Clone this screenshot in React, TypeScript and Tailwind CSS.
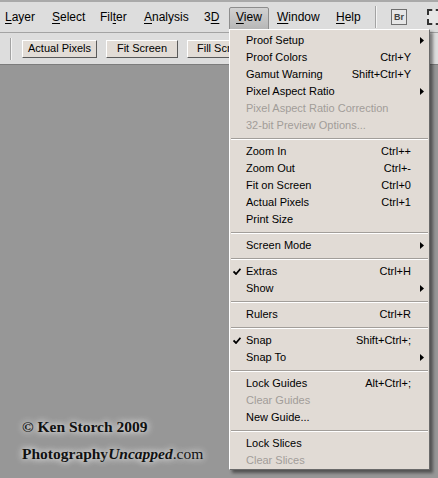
type Item = {
  label: string;
  keys?: string;
  sub?: boolean;
  off?: boolean;
  checked?: boolean;
};

const viewMenu: Item[][] = [
  [
    { label: "Proof Setup", sub: true },
    { label: "Proof Colors", keys: "Ctrl+Y" },
    { label: "Gamut Warning", keys: "Shift+Ctrl+Y" },
    { label: "Pixel Aspect Ratio", sub: true },
    { label: "Pixel Aspect Ratio Correction", off: true },
    { label: "32-bit Preview Options...", off: true },
  ],
  [
    { label: "Zoom In", keys: "Ctrl++" },
    { label: "Zoom Out", keys: "Ctrl+-" },
    { label: "Fit on Screen", keys: "Ctrl+0" },
    { label: "Actual Pixels", keys: "Ctrl+1" },
    { label: "Print Size" },
  ],
  [{ label: "Screen Mode", sub: true }],
  [
    { label: "Extras", keys: "Ctrl+H", checked: true },
    { label: "Show", sub: true },
  ],
  [{ label: "Rulers", keys: "Ctrl+R" }],
  [
    { label: "Snap", keys: "Shift+Ctrl+;", checked: true },
    { label: "Snap To", sub: true },
  ],
  [
    { label: "Lock Guides", keys: "Alt+Ctrl+;" },
    { label: "Clear Guides", off: true },
    { label: "New Guide..." },
  ],
  [{ label: "Lock Slices" }, { label: "Clear Slices", off: true }],
];

// label, mnemonic index, slot width
const topMenus: [string, number, number][] = [
  ["Layer", 0, 47],
  ["Select", 0, 48],
  ["Filter", 3, 44],
  ["Analysis", 0, 60],
  ["3D", 1, 25],
];

function Mnemonic({ text, at }: { text: string; at: number }) {
  return (
    <>
      {text.slice(0, at)}
      <span className="underline underline-offset-[2px]">{text[at]}</span>
      {text.slice(at + 1)}
    </>
  );
}

function ToolButton({ label, width }: { label: string; width: string }) {
  return (
    <div
      className={`${width} h-[18px] shrink-0 flex items-center justify-center bg-[#e2dcd6] border border-t-white border-l-white border-r-[#5a5a5a] border-b-[#5a5a5a] text-[11px] text-black`}
    >
      {label}
    </div>
  );
}

function MenuRow({ item }: { item: Item }) {
  return (
    <div
      className={`relative h-[17px] flex items-center justify-between pl-[16px] pr-[18px] ${
        item.off ? "text-[#a19d99]" : "text-black"
      }`}
    >
      {item.checked && (
        <svg
          className="absolute left-[3px] top-[5px]"
          width="8"
          height="7"
          viewBox="0 0 8 7"
        >
          <path d="M0.5 3.5 L3 6 L7.5 0.8" fill="none" stroke="#000" strokeWidth="1.8" />
        </svg>
      )}
      <span>{item.label}</span>
      {item.keys && <span>{item.keys}</span>}
      {item.sub && (
        <svg
          className="absolute right-[5px] top-[5px]"
          width="4"
          height="7"
          viewBox="0 0 4 7"
        >
          <path d="M0 0 L4 3.5 L0 7 Z" fill="#000" />
        </svg>
      )}
    </div>
  );
}

export default function App() {
  return (
    <div className="relative w-[438px] h-[478px] overflow-hidden flex flex-col bg-[#979797] font-['Liberation_Sans',Arial,sans-serif]">
      {/* Menu bar */}
      <div className="h-[33px] shrink-0 flex items-center pl-[5px] bg-[#dddddd] border-t-2 border-[#a9a9a9] border-b border-b-[#a3a3a3] text-[12px] text-black">
        {topMenus.map(([label, at, w]) => (
          <div key={label} style={{ width: w }} className="shrink-0">
            <Mnemonic text={label} at={at} />
          </div>
        ))}
        <div className="self-start w-[40px] h-[25px] mt-[5px] shrink-0 pl-[6px] rounded-t-[2px] border border-[#8d8d8d] bg-gradient-to-b from-[#d2d2d2] to-[#b4b4b4]">
          <Mnemonic text="View" at={0} />
        </div>
        <div className="w-[59px] ml-[8px] shrink-0">
          <Mnemonic text="Window" at={0} />
        </div>
        <div className="w-[39px] shrink-0">
          <Mnemonic text="Help" at={0} />
        </div>
        <div className="w-px h-[22px] bg-[#a3a3a3] shadow-[1px_0_0_#f4f4f4] shrink-0" />
        <div className="ml-[15px] w-[16px] h-[16px] shrink-0 flex items-center justify-center border border-[#6f6f6f] bg-[#e6e6e6] text-[9px] font-bold text-[#444] leading-none">
          Br
        </div>
        <div className="ml-[20px] w-[14px] h-[16px] shrink-0 border-2 border-dashed border-[#333] bg-[#e6e6e6]" />
      </div>

      {/* Options bar */}
      <div className="h-[32px] shrink-0 flex items-center pl-[10px] gap-[9px] bg-[#dddddd] border-b border-[#7c7c7c]">
        <div className="w-px h-[22px] bg-[#a3a3a3] shadow-[1px_0_0_#f4f4f4] shrink-0 mr-[2px]" />
        <ToolButton label="Actual Pixels" width="w-[75px]" />
        <ToolButton label="Fit Screen" width="w-[72px]" />
        <ToolButton label="Fill Screen" width="w-[72px]" />
      </div>

      {/* Canvas with watermark */}
      <div className="flex-1 flex flex-col justify-end pl-[22px] pb-[14px] font-['Liberation_Serif',serif] text-[15.5px] font-bold text-[#111] [text-shadow:0_0_6px_rgba(255,255,255,0.85),0_0_10px_rgba(255,255,255,0.5)]">
        <div className="leading-[20px] mb-[7px]">© Ken Storch 2009</div>
        <div className="leading-[20px]">
          Photography<i>Uncapped</i>
          <span className="font-normal">.com</span>
        </div>
      </div>

      {/* View dropdown */}
      <div className="absolute left-[229px] top-[29px] w-[201px] pt-[2px] bg-[#e1dbd5] border border-t-white border-l-white border-r-[#6a6a6a] border-b-[#6a6a6a] shadow-[3px_3px_3px_rgba(0,0,0,0.45)] text-[11px]">
        {viewMenu.map((group, gi) => (
          <div key={gi}>
            {gi > 0 && (
              <div className="h-[9px] flex items-center px-[1px]">
                <div className="w-full h-[2px] border-t border-[#a29e9a] border-b border-b-white" />
              </div>
            )}
            {group.map((item) => (
              <MenuRow key={item.label} item={item} />
            ))}
          </div>
        ))}
      </div>
    </div>
  );
}
